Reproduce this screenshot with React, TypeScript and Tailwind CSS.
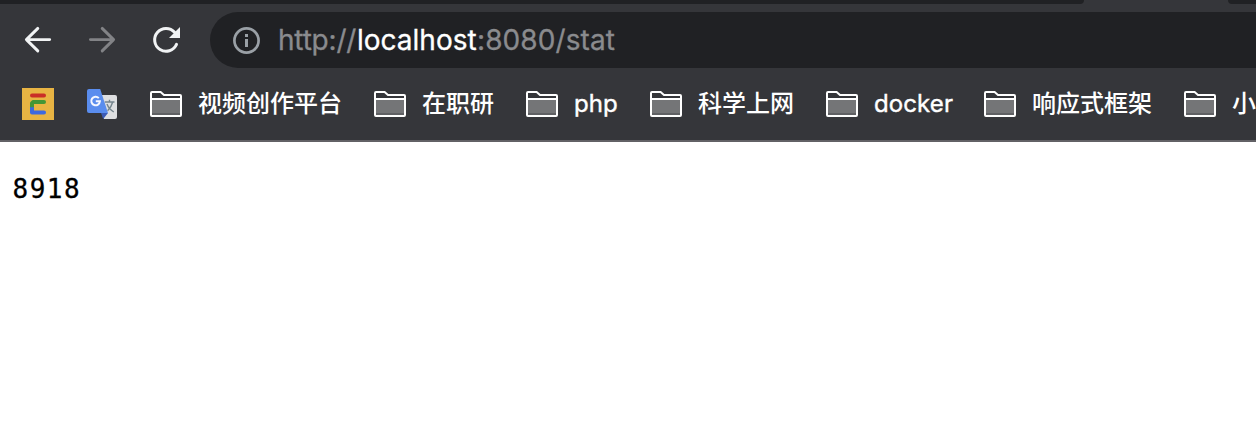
const bookmarks = [
  { label: '视频创作平台', style: 'w-[144px] font-medium' },
  { label: '在职研', style: 'w-[72px] font-medium' },
  { label: 'php', style: 'w-[44px] tracking-[0.1px] [-webkit-text-stroke:0.4px_white]' },
  { label: '科学上网', style: 'w-[96px] font-medium' },
  { label: 'docker', style: 'w-[78px] tracking-[0.1px] [-webkit-text-stroke:0.4px_white]' },
  { label: '响应式框架', style: 'w-[120px] font-medium' },
  { label: '小程序', style: 'w-[72px] font-medium' },
];

function BackIcon() {
  return (
    <svg className="size-8 shrink-0" viewBox="0 0 32 32" fill="none" stroke="#f1f3f4" strokeWidth="2.9" strokeLinecap="round" strokeLinejoin="round">
      <path d="M27.7 15.6H4.5M15.8 4.4L4.4 15.6L15.8 26.9" />
    </svg>
  );
}

function ForwardIcon() {
  return (
    <svg className="size-8 shrink-0" viewBox="0 0 32 32" fill="none" stroke="#828386" strokeWidth="2.9" strokeLinecap="round" strokeLinejoin="round">
      <path d="M4.4 15.6H27.4M16.2 4.4L27.6 15.6L16.2 26.9" />
    </svg>
  );
}

function ReloadIcon() {
  return (
    <svg className="size-8 shrink-0" viewBox="0 0 32 32">
      <path d="M26.5 20.4A11.4 11.4 0 1 1 24.6 8.3" fill="none" stroke="#f1f3f4" strokeWidth="3" strokeLinecap="round" />
      <path d="M30 3V14H19Z" fill="#f1f3f4" />
    </svg>
  );
}

function InfoIcon() {
  return (
    <svg className="size-7 shrink-0" viewBox="0 0 28 28">
      <circle cx="14.5" cy="14.5" r="12.1" fill="none" stroke="#9aa0a6" strokeWidth="2.7" />
      <path d="M13 8h3v3h-3zM13 13h3v8h-3z" fill="#9aa0a6" />
    </svg>
  );
}

function LetterIcon() {
  return (
    <svg className="size-8 shrink-0" viewBox="0 0 32 32" fill="none" strokeLinecap="round" strokeLinejoin="round" strokeWidth="4">
      <rect width="32" height="32" fill="#e8b443" />
      <path d="M10 24V19" stroke="#3d69df" strokeLinecap="butt" />
      <path d="M22 24.6H10V23" stroke="#3d69df" />
      <path d="M22 14H11.3L10 15.2V19.2" stroke="#439636" strokeLinecap="butt" />
      <path d="M22 14H12" stroke="#439636" />
      <path d="M10 7.6H22" stroke="#ca2e27" />
    </svg>
  );
}

function TranslateIcon() {
  return (
    <svg className="h-8 w-8 shrink-0" viewBox="0 0 32 32">
      <path d="M14 7H29Q31 7 31 9V29Q31 31 29 31H18Z" fill="#dedfe1" />
      <path d="M15 25H22L17.2 31Z" fill="#3c5bb5" />
      <path d="M3 1H14.2L22 25H3Q1 25 1 23V3Q1 1 3 1Z" fill="#5a8dee" />
      <path d="M12.8 10.1A4.3 4.3 0 1 0 13.9 13.3H9.8" fill="none" stroke="#f5f8ff" strokeWidth="2" />
      <path d="M18.8 14H28.5M23.5 11.8V14M26.7 14C25.5 18.5 23.2 21.2 21.6 22.7M21 16C22.4 20 25 22.2 27.8 24" fill="none" stroke="#75858d" strokeWidth="1.4" />
    </svg>
  );
}

function FolderIcon() {
  return (
    <svg className="h-[26px] w-8 shrink-0" viewBox="0 0 32 26">
      <path d="M1 8H31V25H1Z" fill="#747577" />
      <path d="M2 22H30V24H2Z" fill="#5f6063" />
      <path d="M1 8H31M2 1H10.6L14 4H30Q31 4 31 5V24Q31 25 30 25H2Q1 25 1 24V2Q1 1 2 1Z" fill="none" stroke="white" strokeWidth="2" />
    </svg>
  );
}

export default function App() {
  return (
    <div className="h-[436px] w-full overflow-hidden bg-white font-['Inter','Noto_Sans_CJK_SC',sans-serif]">
      <header className="flex h-[142px] flex-col border-b-2 border-[#626165] bg-[#35363a]">
        <div className="flex h-1 shrink-0 justify-between">
          <div className="h-1 w-[1084px] rounded-br-[8px] bg-[#202124]" />
          <div className="h-1 w-[28px] rounded-bl-[8px] bg-[#202124]" />
        </div>
        <div className="flex h-[72px] shrink-0 items-center pl-[22px]">
          <nav className="flex w-[188px] shrink-0 gap-8">
            <BackIcon />
            <ForwardIcon />
            <ReloadIcon />
          </nav>
          <div className="flex h-14 flex-1 items-center rounded-l-full bg-[#202124] pl-[22px]">
            <InfoIcon />
            <div className="ml-[18px] flex text-[28px] leading-[34px] whitespace-nowrap text-[#8a8b8e] [-webkit-text-stroke:0.3px_currentColor]">
              <span className="w-[79px] tracking-[-0.2px]">http://</span>
              <span className="w-[120px] text-white">localhost</span>
              <span className="tracking-[0.1px]">:8080/stat</span>
            </div>
          </div>
        </div>
        <div className="flex h-14 shrink-0 items-center pl-[22px]">
          <LetterIcon />
          <div className="mr-8 ml-8">
            <TranslateIcon />
          </div>
          <div className="flex shrink-0 gap-8">
            {bookmarks.map(({ label, style }) => (
              <div key={label} className="flex shrink-0 items-center gap-4">
                <FolderIcon />
                <span className={`${style} text-2xl leading-8 whitespace-nowrap text-white`}>{label}</span>
              </div>
            ))}
          </div>
        </div>
      </header>
      <main className="pt-[31px] pl-[12.5px]">
        <pre className="font-['DejaVu_Sans_Mono',monospace] text-[26px] leading-8 tracking-[1.5px] text-black [-webkit-text-stroke:0.3px_black]">8918</pre>
      </main>
    </div>
  );
}
